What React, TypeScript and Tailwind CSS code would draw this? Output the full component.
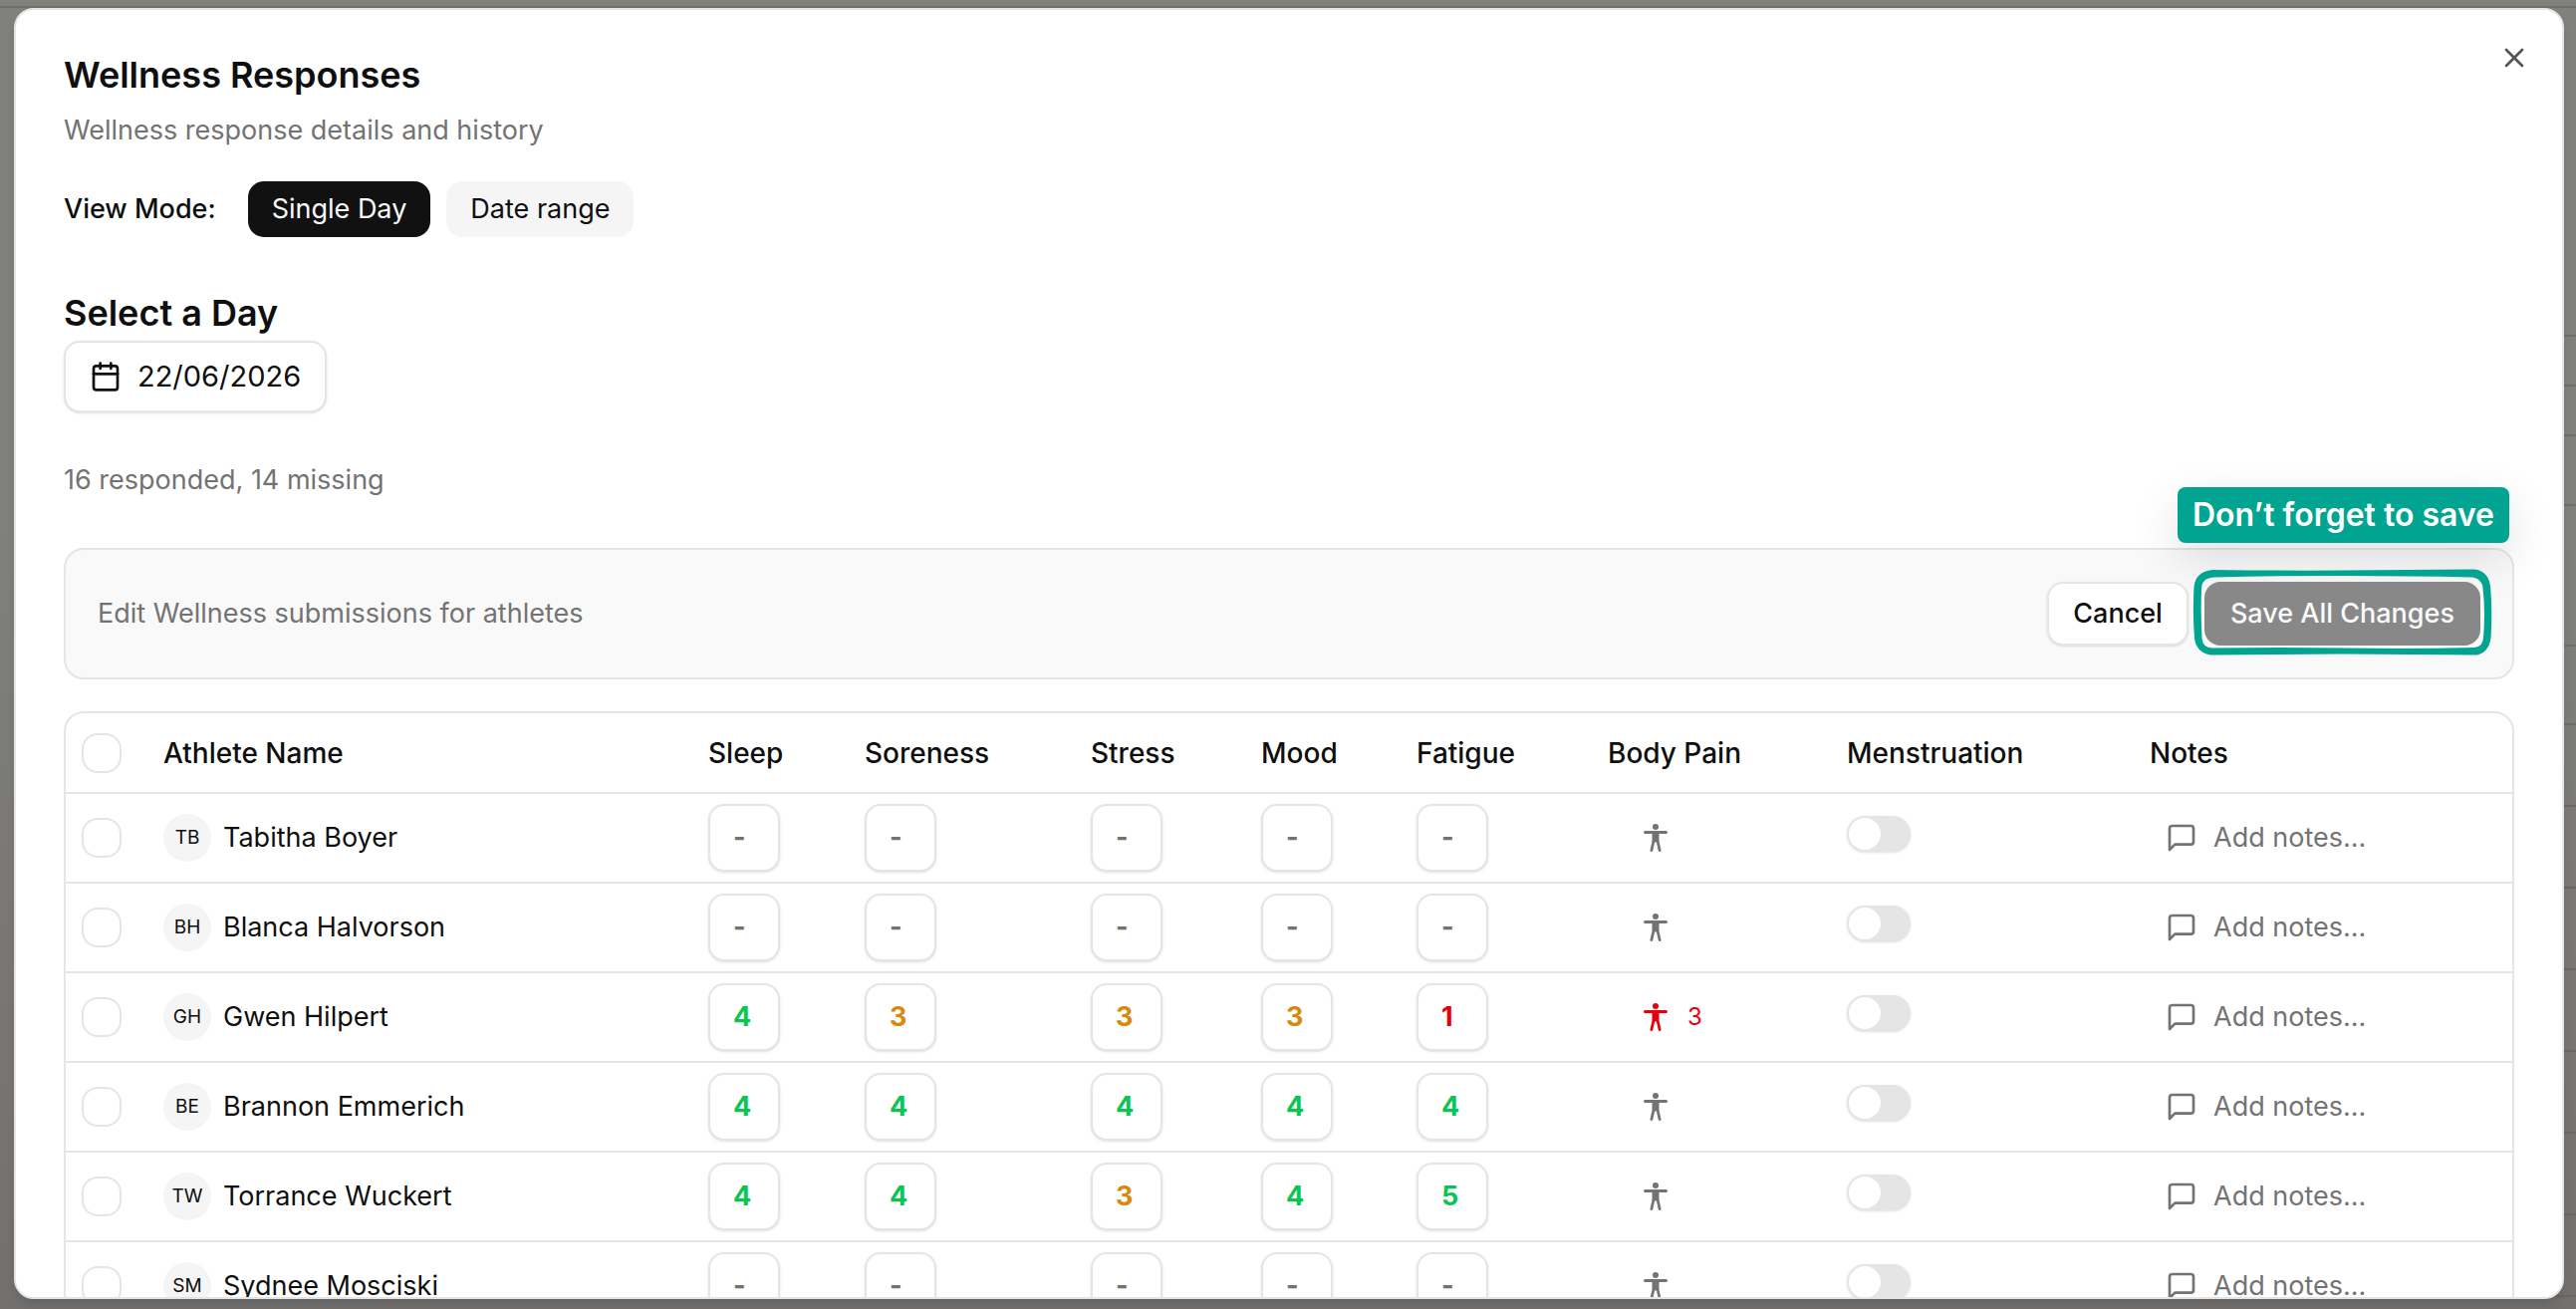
import { Calendar, X } from "lucide-react";

const metrics = ["Sleep", "Soreness", "Stress", "Mood", "Fatigue"];

const athletes = [
  { initials: "TB", name: "Tabitha Boyer", scores: ["-", "-", "-", "-", "-"], pain: 0 },
  { initials: "BH", name: "Blanca Halvorson", scores: ["-", "-", "-", "-", "-"], pain: 0 },
  { initials: "GH", name: "Gwen Hilpert", scores: ["4", "3", "3", "3", "1"], pain: 3 },
  { initials: "BE", name: "Brannon Emmerich", scores: ["4", "4", "4", "4", "4"], pain: 0 },
  { initials: "TW", name: "Torrance Wuckert", scores: ["4", "4", "3", "4", "5"], pain: 0 },
  { initials: "SM", name: "Sydnee Mosciski", scores: ["-", "-", "-", "-", "-"], pain: 0 },
];

function scoreColor(score: string) {
  if (score === "-") return "text-[#737373]";
  if (Number(score) >= 4) return "text-[#0ac553]";
  if (Number(score) >= 2) return "text-[#d68a0c]";
  return "text-[#e7000b]";
}

function BodyIcon() {
  return (
    <svg className="w-6 h-7" fill="currentColor" viewBox="0 0 24 28">
      <circle cx="12" cy="3" r="3" />
      <path d="M1.5 7h21a1.500 1.500 0 010 3H15.500v7.500l2 8.800a1.400 1.400 0 01-2.700.7L12.900 18.500h-1.800L9.200 27a1.400 1.400 0 01-2.700-.7l2-8.800V10H1.500a1.500 1.500 0 010-3z" />
    </svg>
  );
}

function NoteIcon() {
  return (
    <svg
      className="w-8 h-8"
      fill="none"
      stroke="currentColor"
      strokeWidth="2"
      strokeLinecap="round"
      strokeLinejoin="round"
      viewBox="0 0 24 24"
    >
      <path d="M21 15a2 2 0 0 1-2 2H7l-4 4V5a2 2 0 0 1 2-2h14a2 2 0 0 1 2 2z" />
    </svg>
  );
}

// hand-drawn frame around the save button
function Highlight() {
  return (
    <svg
      className="pointer-events-none absolute -top-[13px] -left-3 h-[calc(100%+23px)] w-[calc(100%+24px)]"
      fill="#00a491"
      fillRule="evenodd"
      preserveAspectRatio="none"
      viewBox="0 0 300 87"
    >
      <path d="M20 1Q100 2 150 1.500Q220 1 282 0.500Q296 2 298 18Q300 42 298.500 68Q297 84 284 86.500Q220 86 150 85.500Q80 86 18 86.500Q4 84 2 70Q0 44 1.500 18Q3 3 20 1ZM22 8.500Q9 9 9 20Q8 44 9.500 70Q10 79 20 79.500Q90 78.500 150 79.500Q220 80.500 282 79Q291 78 291 68Q293 42 290.500 20Q290 10 280 8.500Q220 7 150 7Q80 7 22 8.500Z" />
    </svg>
  );
}

function Checkbox({ label }: { label: string }) {
  return (
    <input
      type="checkbox"
      aria-label={label}
      className="block appearance-none w-10 h-10 rounded-2xl border-2 border-[#e5e5e5] bg-white"
    />
  );
}

function Toggle({ label }: { label: string }) {
  return (
    <input
      type="checkbox"
      role="switch"
      aria-label={label}
      className="block appearance-none w-16 h-9 mb-2 rounded-full bg-[#e5e5e5] p-0.5 shadow-sm before:block before:w-8 before:h-8 before:rounded-full before:bg-white"
    />
  );
}

// dimmed page that shows behind the dialog
function Backdrop() {
  return (
    <div
      className="absolute inset-0 overflow-hidden bg-linear-to-b from-[#80807d] from-40% to-[#737170]"
      aria-hidden="true"
    >
      <div className="h-2 border-b-2 border-[#716f6d]" />
      <div className="ml-auto w-1/2">
        <div className="h-[330px] border-b-2 border-[#716e6d]" />
        <div className="h-[50px] border-b-2 border-[#716e6d]" />
        <div className="h-[50px] border-b-2 border-[#716e6d]" />
        <div className="h-[70px] border-b-2 border-[#716e6d]" />
        <div className="h-[141px] border-b-2 border-[#716e6d]" />
        <div className="h-[79px] border-b-2 border-[#6e6b6a]" />
        {Array.from({ length: 7 }, (_, i) => (
          <div key={i} className="h-[82px] border-b-2 border-[#6a6766]" />
        ))}
      </div>
    </div>
  );
}

export default function App() {
  return (
    <div className="relative h-screen overflow-hidden pt-2 pb-[10px] pl-[14px] pr-3 font-['Inter',sans-serif] text-[27px] leading-10 text-[#0f0f0f]">
      <Backdrop />
      <div
        role="dialog"
        aria-labelledby="dialog-title"
        className="relative h-full overflow-hidden rounded-[20px] border-2 border-[#e5e5e5] bg-white px-12 pt-[47px] shadow-lg"
      >
        <button type="button" aria-label="Close" className="absolute top-8 right-8 text-[#555]">
          <X className="w-8 h-8" />
        </button>

        <h1 id="dialog-title" className="text-[36px] leading-9 font-semibold">
          Wellness Responses
        </h1>
        <p className="mt-[18px] text-[#737373]">Wellness response details and history</p>

        <div className="mt-[31px] flex items-center">
          <span className="font-medium">View Mode:</span>
          <button type="button" className="ml-8 h-14 rounded-2xl bg-[#111] px-6 text-[#fafafa]">
            Single Day
          </button>
          <button type="button" className="ml-4 h-14 rounded-2xl bg-[#f5f5f5] px-6">
            Date range
          </button>
        </div>

        <h2 className="mt-12 text-[36px] leading-14 font-semibold">Select a Day</h2>
        <button
          type="button"
          className="flex h-18 items-center gap-4 rounded-2xl border-2 border-[#e5e5e5] bg-white px-6 text-[29px] shadow-sm"
        >
          <Calendar className="w-8 h-8" />
          22/06/2026
        </button>

        <p className="mt-12 text-[#737373]">16 responded, 14 missing</p>

        <div className="relative mt-12 flex items-center justify-between rounded-[20px] border-2 border-[#e5e5e5] bg-[#f9f9f9] p-8">
          <div className="absolute right-[3px] bottom-full mb-[7px] rounded-lg bg-[#00a491] px-[15px] text-[32px] leading-14 font-semibold text-white shadow-[0_16px_48px_rgba(0,0,0,0.12)]">
            Don’t forget to save
          </div>
          <p className="text-[#737373]">Edit Wellness submissions for athletes</p>
          <div className="flex gap-4">
            <button
              type="button"
              className="relative h-16 rounded-2xl border-2 border-[#e5e5e5] bg-white px-6 font-medium shadow-sm"
            >
              Cancel
            </button>
            <div className="relative">
              <button type="button" className="h-16 rounded-2xl bg-[#888] px-[26px] font-medium text-[#fafafa]">
                Save All Changes
              </button>
              <Highlight />
            </div>
          </div>
        </div>

        <div className="mt-8 overflow-hidden rounded-t-[20px] border-2 border-[#e5e5e5]">
          <table className="w-full table-fixed text-left">
            <colgroup>
              <col className="w-[82px]" />
              <col className="w-[547px]" />
              <col className="w-[157px]" />
              <col className="w-[227px]" />
              <col className="w-[171px]" />
              <col className="w-[156px]" />
              <col className="w-[192px]" />
              <col className="w-[240px]" />
              <col className="w-[304px]" />
              <col />
            </colgroup>
            <thead className="text-[28px]">
              <tr className="h-20 border-b-2 border-[#e5e5e5]">
                <th className="px-4">
                  <Checkbox label="Select all athletes" />
                </th>
                <th className="px-4 font-medium">Athlete Name</th>
                {metrics.map((metric) => (
                  <th key={metric} className="px-4 font-medium">
                    {metric}
                  </th>
                ))}
                <th className="px-4 font-medium">Body Pain</th>
                <th className="px-4 font-medium">Menstruation</th>
                <th className="px-4 font-medium">Notes</th>
              </tr>
            </thead>
            <tbody>
              {athletes.map((athlete) => (
                <tr key={athlete.name} className="h-[90px] border-b-2 border-[#e5e5e5]">
                  <td className="px-4">
                    <Checkbox label={`Select ${athlete.name}`} />
                  </td>
                  <td className="px-4">
                    <div className="flex items-center gap-3">
                      <span className="flex w-12 h-12 items-center justify-center rounded-full bg-[#f5f5f5] text-[19px]">
                        {athlete.initials}
                      </span>
                      {athlete.name}
                    </div>
                  </td>
                  {athlete.scores.map((score, i) => (
                    <td key={metrics[i]} className="px-4">
                      <button
                        type="button"
                        aria-label={`${metrics[i]} for ${athlete.name}`}
                        className={`block w-18 h-17 rounded-2xl border-2 border-[#e5e5e5] bg-white pl-[23px] text-left font-bold shadow-sm ${scoreColor(score)}`}
                      >
                        {score}
                      </button>
                    </td>
                  ))}
                  <td className="px-4">
                    <button
                      type="button"
                      aria-label={`Body pain for ${athlete.name}`}
                      className={`flex items-center gap-5 pl-9 ${athlete.pain ? "text-[#e7000b]" : "text-[#737373]"}`}
                    >
                      <BodyIcon />
                      {athlete.pain > 0 && <span className="text-2xl">{athlete.pain}</span>}
                    </button>
                  </td>
                  <td className="px-4">
                    <Toggle label={`Menstruation for ${athlete.name}`} />
                  </td>
                  <td className="px-4">
                    <button type="button" className="flex items-center gap-4 pl-4 text-[#737373]">
                      <NoteIcon />
                      Add notes...
                    </button>
                  </td>
                </tr>
              ))}
            </tbody>
          </table>
        </div>
      </div>
    </div>
  );
}
